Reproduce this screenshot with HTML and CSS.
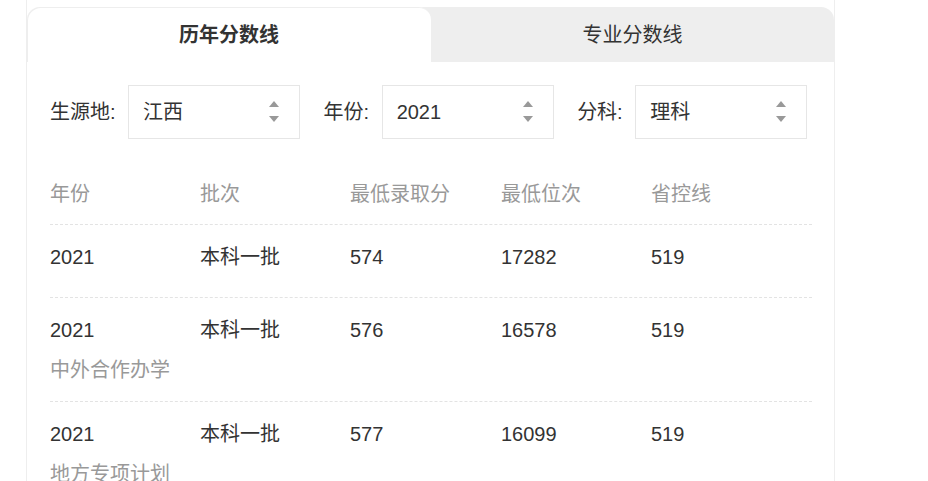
FILE: index.html
```html
<!DOCTYPE html>
<html lang="zh-CN">
<head>
<meta charset="utf-8">
<link rel="stylesheet" href="styles.css">
</head>
<body>
<div class="panel">
  <div class="tabs">
    <div class="tab active">历年分数线</div>
    <div class="tab">专业分数线</div>
  </div>
  <div class="content">
    <div class="filters">
      <span class="label">生源地:</span>
      <div class="select"><span>江西</span><span class="arrows"><i class="up"></i><i class="down"></i></span></div>
      <span class="label">年份:</span>
      <div class="select"><span>2021</span><span class="arrows"><i class="up"></i><i class="down"></i></span></div>
      <span class="label">分科:</span>
      <div class="select"><span>理科</span><span class="arrows"><i class="up"></i><i class="down"></i></span></div>
    </div>
    <div class="table">
      <div class="row head">
        <div class="cols"><span>年份</span><span>批次</span><span>最低录取分</span><span>最低位次</span><span>省控线</span></div>
      </div>
      <div class="row">
        <div class="cols"><span>2021</span><span>本科一批</span><span>574</span><span>17282</span><span>519</span></div>
      </div>
      <div class="row">
        <div class="cols"><span>2021</span><span>本科一批</span><span>576</span><span>16578</span><span>519</span></div>
        <div class="sub">中外合作办学</div>
      </div>
      <div class="row">
        <div class="cols"><span>2021</span><span>本科一批</span><span>577</span><span>16099</span><span>519</span></div>
        <div class="sub">地方专项计划</div>
      </div>
    </div>
  </div>
</div>
</body>
</html>
```
FILE: styles.css
```css
html, body {
  margin: 0;
  padding: 0;
  background: #fff;
}
body {
  font-family: "Liberation Sans", "Noto Sans CJK SC", sans-serif;
  color: #333;
  font-size: 20px;
}
.panel {
  margin-left: 26px;
  width: 807px;
  min-height: 481px;
  border-left: 1px solid #eee;
  border-right: 1px solid #eee;
  padding-top: 7px;
}
.tabs {
  display: flex;
  height: 55px;
  background: #eee;
  border-radius: 13px 13px 0 0;
}
.tab {
  flex: 1;
  display: flex;
  align-items: center;
  justify-content: center;
  font-size: 20px;
  color: #333;
  padding-bottom: 2px;
}
.tab.active {
  flex: 0 0 404px;
  background: #fff;
  font-weight: bold;
  border-radius: 13px 13px 0 0;
  box-shadow: inset 1px 1px 0 #eee;
}
.content {
  padding: 0 22px 0 23px;
}
.filters {
  display: flex;
  align-items: center;
  margin-top: 23px;
}
.label {
  font-size: 20px;
  line-height: 20px;
  color: #333;
  margin-right: 12.5px;
  padding-bottom: 1px;
}
.select {
  box-sizing: border-box;
  width: 172px;
  height: 54px;
  border: 1px solid #e6e6e6;
  display: flex;
  align-items: center;
  justify-content: space-between;
  padding: 0 20px 1px 14px;
  margin-right: 23.5px;
  font-size: 20px;
  line-height: 20px;
}
.select:last-child {
  margin-right: 0;
}
.arrows {
  display: flex;
  flex-direction: column;
  gap: 9px;
}
.arrows i {
  display: block;
  width: 0;
  height: 0;
  border-left: 5px solid transparent;
  border-right: 5px solid transparent;
}
.arrows .up {
  border-bottom: 6px solid #999;
}
.arrows .down {
  border-top: 6px solid #999;
}
.table {
  margin-top: 45px;
  width: 762px;
}
.row {
  padding: 22px 0 30px;
  border-bottom: 1px dashed #e3e3e3;
  line-height: 20px;
}
.row.head {
  padding: 0 0 20px;
  color: #999;
}
.cols {
  display: grid;
  grid-template-columns: 150px 150px 151px 150px 1fr;
}
.sub {
  color: #999;
  margin-top: 20px;
  margin-bottom: -9px;
}
```
